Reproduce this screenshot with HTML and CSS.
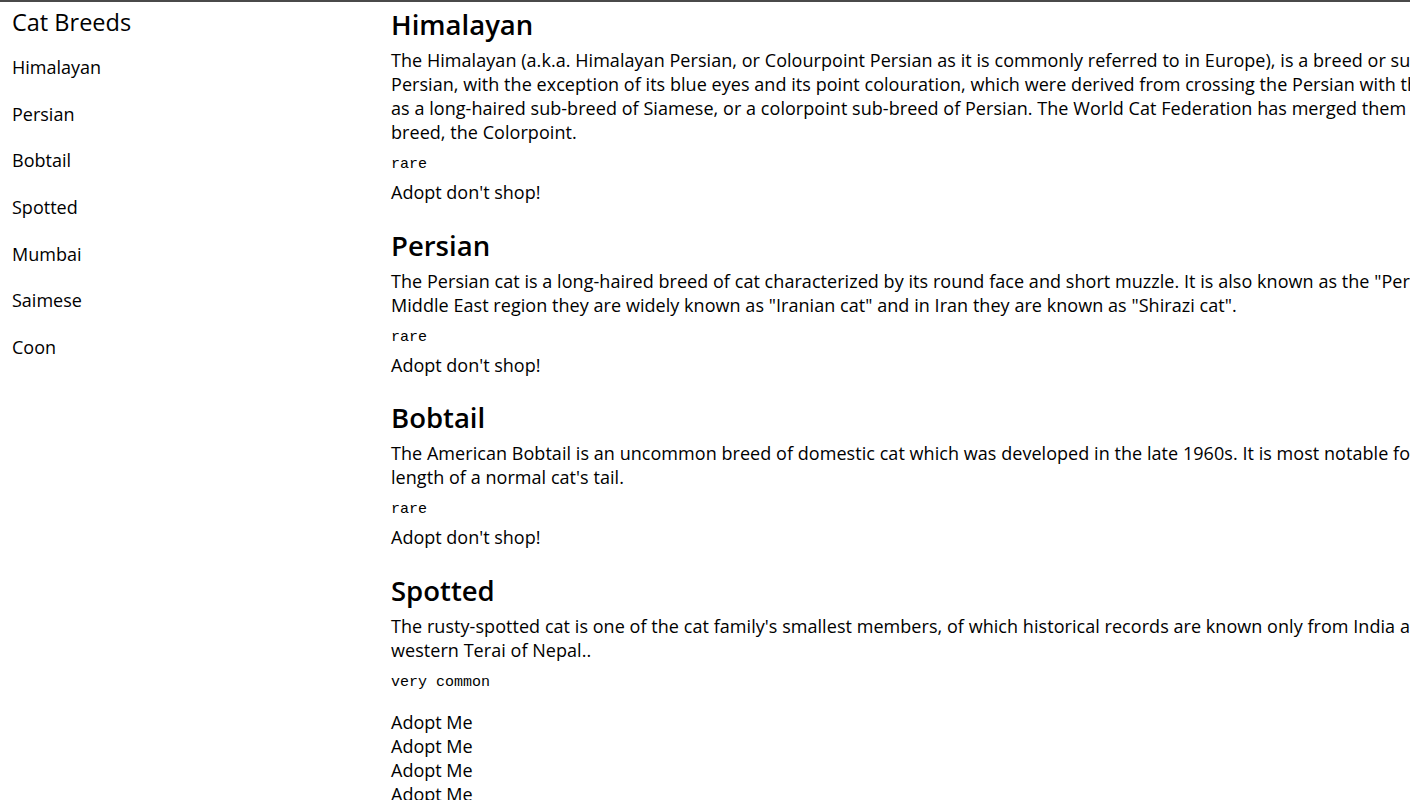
FILE: index.html
```html
<!DOCTYPE html>
<html lang="en">
<head>
<meta charset="utf-8">
<title>Cat Breeds</title>
<link rel="stylesheet" href="styles.css">
</head>
<body>
<div class="page">
  <nav class="sidebar">
    <h1 class="sidebar-title">Cat Breeds</h1>
    <ul class="nav-list">
      <li><a href="#himalayan">Himalayan</a></li>
      <li><a href="#persian">Persian</a></li>
      <li><a href="#bobtail">Bobtail</a></li>
      <li><a href="#spotted">Spotted</a></li>
      <li><a href="#mumbai">Mumbai</a></li>
      <li><a href="#saimese">Saimese</a></li>
      <li><a href="#coon">Coon</a></li>
    </ul>
  </nav>
  <main class="content">
    <section class="breed" id="himalayan">
      <h2 class="breed-name">Himalayan</h2>
      <p class="breed-desc">The Himalayan (a.k.a. Himalayan Persian, or Colourpoint Persian as it is commonly referred to in Europe), is a breed or sub-type of long-haired cat identical in type to the<br>Persian, with the exception of its blue eyes and its point colouration, which were derived from crossing the Persian with the Siamese. Some registries may classify the Himalayan<br>as a long-haired sub-breed of Siamese, or a colorpoint sub-breed of Persian. The World Cat Federation has merged them with the Colourpoint Shorthair and Javanese into a single<br>breed, the Colorpoint.</p>
      <code class="rarity">rare</code>
      <p class="adopt">Adopt don't shop!</p>
    </section>
    <section class="breed" id="persian">
      <h2 class="breed-name">Persian</h2>
      <p class="breed-desc">The Persian cat is a long-haired breed of cat characterized by its round face and short muzzle. It is also known as the "Persian Longhair" in the English-speaking countries. In the<br>Middle East region they are widely known as "Iranian cat" and in Iran they are known as "Shirazi cat".</p>
      <code class="rarity">rare</code>
      <p class="adopt">Adopt don't shop!</p>
    </section>
    <section class="breed" id="bobtail">
      <h2 class="breed-name">Bobtail</h2>
      <p class="breed-desc">The American Bobtail is an uncommon breed of domestic cat which was developed in the late 1960s. It is most notable for its stubby "bobbed" tail about one-third to one-half the<br>length of a normal cat's tail.</p>
      <code class="rarity">rare</code>
      <p class="adopt">Adopt don't shop!</p>
    </section>
    <section class="breed" id="spotted">
      <h2 class="breed-name">Spotted</h2>
      <p class="breed-desc">The rusty-spotted cat is one of the cat family's smallest members, of which historical records are known only from India and Sri Lanka. In 2012, it was recorded in the<br>western Terai of Nepal..</p>
      <code class="rarity">very common</code>
      <ul class="adopt-list">
        <li>Adopt Me</li>
        <li>Adopt Me</li>
        <li>Adopt Me</li>
        <li>Adopt Me</li>
        <li>Adopt Me</li>
      </ul>
    </section>
  </main>
</div>
</body>
</html>
```

FILE: styles.css
```css
html, body {
  margin: 0;
  padding: 0;
}

body {
  border-top: 2px solid #4a4a4a;
  font-family: "Open Sans", "Noto Sans", sans-serif;
  color: #000;
  background: #fff;
  overflow-x: hidden;
}

.page {
  display: grid;
  grid-template-columns: 379px 1700px;
  padding-left: 12px;
}

.sidebar {
  padding-top: 4px;
}

.sidebar-title {
  margin: 0;
  font-size: 23.5px;
  font-weight: 400;
  line-height: 32px;
}

.nav-list {
  list-style: none;
  margin: 17px 0 0;
  padding: 0;
  display: flex;
  flex-direction: column;
  gap: 22.67px;
}

.nav-list a {
  display: block;
  color: #000;
  text-decoration: none;
  font-size: 18px;
  line-height: 24px;
}

.content {
  padding-top: 6px;
  display: flex;
  flex-direction: column;
  gap: 24.5px;
}

.breed {
  display: flex;
  flex-direction: column;
  align-items: flex-start;
}

.breed-name {
  margin: 0 0 6px;
  font-size: 27.5px;
  font-weight: 600;
  line-height: 34px;
}

.breed-desc {
  margin: 0;
  font-size: 18px;
  line-height: 24px;
  letter-spacing: 0.05px;
}

.rarity {
  display: block;
  margin: 12px 0 6px;
  font-family: "Courier New", "Nimbus Mono PS", "FreeMono", "Liberation Mono", monospace;
  font-size: 15px;
  line-height: 18px;
}

.adopt {
  margin: 0;
  font-size: 18px;
  line-height: 24px;
}

.adopt-list {
  list-style: none;
  margin: 12px 0 0;
  padding: 0;
  font-size: 18px;
  line-height: 24px;
}
```
